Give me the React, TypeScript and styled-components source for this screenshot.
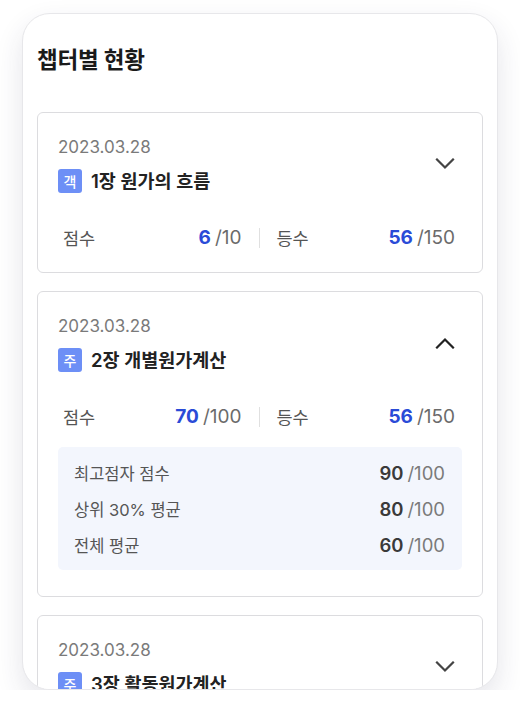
import React from "react";
import styled, { createGlobalStyle } from "styled-components";

const Global = createGlobalStyle`
  html, body { margin: 0; padding: 0; background: #ffffff; }
  body { font-family: Inter, "Noto Sans CJK KR", sans-serif; -webkit-font-smoothing: antialiased; }
  * { box-sizing: border-box; }
`;

const Page = styled.div`
  padding: 13px 22px 0 22px;
`;

const Panel = styled.div`
  width: 476px;
  height: 677px;
  border: 1px solid #e7e7ea;
  border-radius: 28px;
  background: #fff;
  box-shadow: 0 12px 28px rgba(40, 40, 80, 0.12);
  overflow: hidden;
  padding: 30px 14px 0 14px;
`;

const Heading = styled.h2`
  margin: 0 0 37px 0;
  font-family: Inter, "Noto Sans CJK KR", sans-serif;
  font-size: 22.5px;
  line-height: 31px;
  font-weight: 700;
  color: #1a1a1a;
  letter-spacing: -0.2px;
`;

const List = styled.div`
  display: flex;
  flex-direction: column;
  gap: 18px;
`;

const Card = styled.div`
  border: 1px solid #dcdcdf;
  border-radius: 6px;
  padding: 22px 20px 23px 20px;
  background: #fff;
`;

const Header = styled.div`
  display: flex;
  align-items: center;
  justify-content: space-between;
`;

const HeaderText = styled.div`
  display: flex;
  flex-direction: column;
  gap: 10px;
`;

const DateText = styled.div`
  font-size: 17px;
  line-height: 24px;
  color: #7a7a7a;
`;

const TitleRow = styled.div`
  display: flex;
  align-items: center;
  gap: 9px;
  height: 24px;
`;

const Badge = styled.span`
  display: inline-flex;
  align-items: center;
  justify-content: center;
  width: 24px;
  height: 24px;
  border-radius: 3px;
  background: #6d8ff6;
  color: #fff;
  font-size: 14px;
  font-weight: 500;
  font-family: "Noto Sans CJK KR", sans-serif;
`;

const Title = styled.span`
  font-size: 18.5px;
  line-height: 24px;
  font-weight: 600;
  color: #222;
`;

const Chevron = styled.svg`
  margin-right: 7px;
  flex: none;
`;

const Stats = styled.div`
  display: grid;
  grid-template-columns: 1fr 1px 1fr;
  column-gap: 17px;
  align-items: center;
  margin: 32px 7px 0 5px;
  height: 24px;
`;

const StatCell = styled.div`
  display: flex;
  justify-content: space-between;
  align-items: center;
`;

const StatLabel = styled.span`
  font-size: 17.5px;
  color: #555;
`;

const StatValue = styled.span`
  font-size: 19px;
  color: #6b6b6b;
`;

const Strong = styled.b<{ $color: string }>`
  font-weight: 700;
  color: ${(p) => p.$color};
  margin-right: 4px;
`;

const Divider = styled.div`
  width: 1px;
  height: 20px;
  background: #e0e0e0;
`;

const Detail = styled.div`
  margin: 19px 0 3px 0;
  background: #f3f6fd;
  border-radius: 5px;
  padding: 8px 17px 7px 16px;
`;

const DetailRow = styled.div`
  display: flex;
  justify-content: space-between;
  align-items: center;
  height: 36px;
`;

const DetailLabel = styled.span`
  font-size: 16.5px;
  color: #555;
`;

const DetailValue = styled.span`
  font-size: 18.5px;
  color: #7a7a7a;
  & > b {
    font-weight: 600;
  }
`;

type Chapter = {
  date: string;
  badge: string;
  title: string;
  score: string;
  scoreMax: string;
  rank: string;
  rankMax: string;
  open?: boolean;
};

const chapters: Chapter[] = [
  { date: "2023.03.28", badge: "객", title: "1장 원가의 흐름", score: "6", scoreMax: "10", rank: "56", rankMax: "150" },
  { date: "2023.03.28", badge: "주", title: "2장 개별원가계산", score: "70", scoreMax: "100", rank: "56", rankMax: "150", open: true },
  { date: "2023.03.28", badge: "주", title: "3장 활동원가계산", score: "70", scoreMax: "100", rank: "56", rankMax: "150" },
];

const details = [
  { label: "최고점자 점수", value: "90" },
  { label: "상위 30% 평균", value: "80" },
  { label: "전체 평균", value: "60" },
];

const ChevronIcon = ({ up }: { up?: boolean }) => (
  <Chevron width="20" height="12" viewBox="0 0 20 12" fill="none">
    <path
      d={up ? "M2 10.5 L10 2.5 L18 10.5" : "M2 1.5 L10 9.5 L18 1.5"}
      stroke={up ? "#222" : "#444"}
      strokeWidth="2.2"
      strokeLinecap="square"
    />
  </Chevron>
);

export default function App() {
  return (
    <>
      <Global />
      <Page>
        <Panel>
          <Heading>챕터별 현황</Heading>
          <List>
            {chapters.map((c, i) => (
              <Card key={i}>
                <Header>
                  <HeaderText>
                    <DateText>{c.date}</DateText>
                    <TitleRow>
                      <Badge>{c.badge}</Badge>
                      <Title>{c.title}</Title>
                    </TitleRow>
                  </HeaderText>
                  <ChevronIcon up={c.open} />
                </Header>
                <Stats>
                  <StatCell>
                    <StatLabel>점수</StatLabel>
                    <StatValue>
                      <Strong $color="#2a4bd7">{c.score}</Strong>/{c.scoreMax}
                    </StatValue>
                  </StatCell>
                  <Divider />
                  <StatCell>
                    <StatLabel>등수</StatLabel>
                    <StatValue>
                      <Strong $color="#2a4bd7">{c.rank}</Strong>/{c.rankMax}
                    </StatValue>
                  </StatCell>
                </Stats>
                {c.open && (
                  <Detail>
                    {details.map((d) => (
                      <DetailRow key={d.label}>
                        <DetailLabel>{d.label}</DetailLabel>
                        <DetailValue>
                          <Strong $color="#3a3a3a">{d.value}</Strong>/100
                        </DetailValue>
                      </DetailRow>
                    ))}
                  </Detail>
                )}
              </Card>
            ))}
          </List>
        </Panel>
      </Page>
    </>
  );
}
